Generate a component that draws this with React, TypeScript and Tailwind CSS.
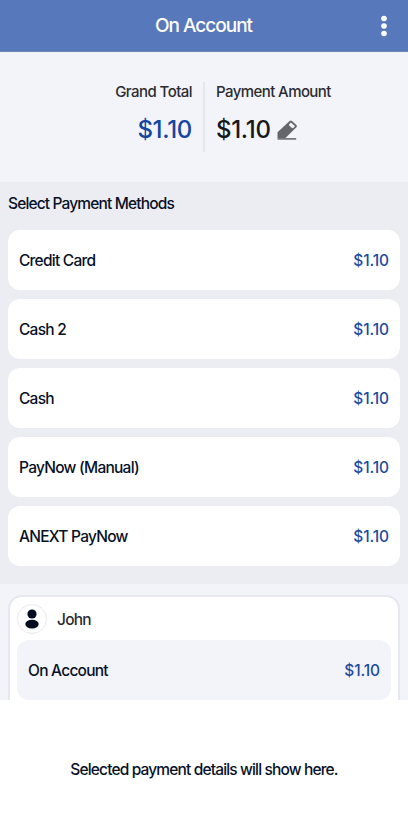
const methods = [
  { name: 'Credit Card', amount: '$1.10' },
  { name: 'Cash 2', amount: '$1.10' },
  { name: 'Cash', amount: '$1.10' },
  { name: 'PayNow (Manual)', amount: '$1.10' },
  { name: 'ANEXT PayNow', amount: '$1.10' },
]

function Header() {
  return (
    <header className="grid h-[52px] shrink-0 grid-cols-[44px_1fr_44px] items-center border-b border-[#6b86b5] bg-[#5779bb] text-white">
      <span />
      <h1 className="pt-[2px] pr-px text-center text-[19px] font-medium tracking-[-1px]">On Account</h1>
      <button aria-label="More" className="flex justify-center pr-[4px]">
        <svg width="8" height="24" viewBox="0 0 8 24" fill="currentColor">
          <circle cx="4" cy="4.5" r="2.8" />
          <circle cx="4" cy="12" r="2.8" />
          <circle cx="4" cy="19.5" r="2.8" />
        </svg>
      </button>
    </header>
  )
}

function EditIcon() {
  return (
    <svg width="21" height="20" viewBox="0 0 21 20">
      <path d="M0.5 18.2V12.2L12.6 0.9Q13.8 0 15 0.9L19.4 5.1Q20.5 6.2 19.4 7.3L8.2 18.2Z" fill="#63676c" />
      <path d="M12 4.4L13.8 2.5L18 6.3L16 8.3Q14.9 8.4 12.2 5.6Z" fill="#f3f4fa" />
      <path d="M0.5 18H19.2V19.8H1.5Q0.5 19.8 0.5 18.9Z" fill="#74777c" />
    </svg>
  )
}

function Summary() {
  return (
    <section className="flex h-[130px] shrink-0 justify-center pt-[30px]">
      <div className="flex w-[203px] flex-col items-end pr-[11px]">
        <p className="text-[15px] leading-5 tracking-[-0.55px] text-[#2b2c31]">Grand Total</p>
        <p className="mt-3 text-2xl leading-8 font-medium tracking-[-0.3px] text-[#1446a0]">$1.10</p>
      </div>
      <div className="h-[70px] w-0.5 bg-[#e5e7ee]" />
      <div className="flex w-[203px] flex-col pl-[11px]">
        <p className="text-[15px] leading-5 tracking-[-0.58px] text-[#2b2c31]">Payment Amount</p>
        <div className="mt-3 flex items-center gap-[6px]">
          <p className="text-2xl leading-8 font-medium tracking-[-0.3px] text-[#17181c]">$1.10</p>
          <EditIcon />
        </div>
      </div>
    </section>
  )
}

function MethodRow({ name, amount }: { name: string; amount: string }) {
  return (
    <li className="flex h-[60px] items-center justify-between rounded-xl bg-white px-[11px] pt-[2px]">
      <span>{name}</span>
      <span className="font-medium tracking-[-0.1px] text-[#1c4a9f]">{amount}</span>
    </li>
  )
}

function Customer() {
  return (
    <section className="h-[116px] shrink-0 overflow-hidden px-2 pt-[11px]">
      <div className="h-[130px] rounded-[14px] border-2 border-[#e6e8f0] bg-white px-[7px] pt-[7px]">
        <div className="flex items-center gap-[10px]">
          <span className="flex size-[30px] items-center justify-center rounded-full border border-[#e6e8f2]">
            <svg width="14" height="20" viewBox="0 0 14 20" fill="#030c20">
              <circle cx="7" cy="5" r="4.6" />
              <ellipse cx="7" cy="15.1" rx="6.7" ry="4.4" />
            </svg>
          </span>
          <span className="pt-px text-[#2b2c31]">John</span>
        </div>
        <div className="mt-[6px] flex h-[60px] items-center justify-between rounded-xl bg-[#f3f4fa] px-[11px] pt-[2px]">
          <span>On Account</span>
          <span className="font-medium tracking-[-0.1px] text-[#1c4a9f]">$1.10</span>
        </div>
      </div>
    </section>
  )
}

export default function App() {
  return (
    <main className="flex h-[836px] w-[408px] flex-col overflow-hidden bg-[#f3f4fa] font-['Inter',sans-serif] text-[15.5px] font-[450] tracking-[-0.75px] text-[#071126]">
      <Header />
      <Summary />
      <section className="h-[402px] shrink-0 bg-[#ecedf3] px-2 pt-[10px]">
        <h2 className="leading-6 font-[450] tracking-[-0.85px]">Select Payment Methods</h2>
        <ul className="mt-[14px] space-y-[9px]">
          {methods.map((m) => (
            <MethodRow key={m.name} name={m.name} amount={m.amount} />
          ))}
        </ul>
      </section>
      <Customer />
      <footer className="flex flex-1 items-center justify-center bg-white pt-[3px]">
        <p className="tracking-[-0.85px]">Selected payment details will show here.</p>
      </footer>
    </main>
  )
}
